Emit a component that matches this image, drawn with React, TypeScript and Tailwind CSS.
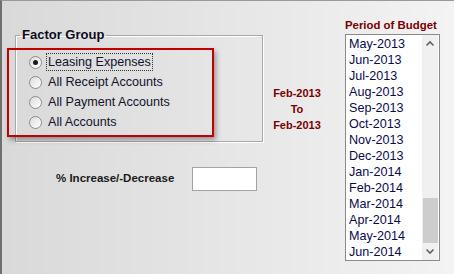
const groups = ["Leasing Expenses", "All Receipt Accounts", "All Payment Accounts", "All Accounts"];

const periods = [
  "May-2013", "Jun-2013", "Jul-2013", "Aug-2013", "Sep-2013", "Oct-2013", "Nov-2013",
  "Dec-2013", "Jan-2014", "Feb-2014", "Mar-2014", "Apr-2014", "May-2014", "Jun-2014",
];

function Radio({ checked }: { checked: boolean }) {
  return (
    <span className="w-[13px] h-[13px] rounded-full border border-[#8c8c8c] bg-gradient-to-br from-[#dcdcdc] to-white flex items-center justify-center shrink-0">
      {checked && <span className="w-[5px] h-[5px] rounded-full bg-[#1a1a1a]" />}
    </span>
  );
}

export default function App() {
  return (
    <div className="relative w-[454px] h-[274px] flex border-l-2 border-t border-l-[#6f6f6f] border-t-[#9a9a9a] bg-gradient-to-r from-[#d9d9d9] to-[#f3f3f3] font-['Liberation_Sans',Arial,sans-serif]">
      {/* left column */}
      <div className="pl-[13px] pt-[26px] w-[261px] shrink-0">
        <fieldset className="w-[248px] h-[115px] border border-[#a8a8a8] shadow-[1px_1px_0_#fff,inset_1px_1px_0_#fff]">
          <legend className="ml-[4px] px-[2px] text-[13px] leading-[16px] font-bold text-[#0c0c1c]">Factor Group</legend>
          <div className="pl-[13px] pt-[9px] flex flex-col">
            {groups.map((g, i) => (
              <div key={g} className="h-[20px] flex items-center gap-[5px]">
                <Radio checked={i === 0} />
                <span
                  className={
                    "text-[12.6px] leading-[16px] text-[#12122c] px-[1px] " +
                    (i === 0 ? "outline outline-1 outline-dotted outline-[#333]" : "")
                  }
                >
                  {g}
                </span>
              </div>
            ))}
          </div>
        </fieldset>
        <div className="mt-[25px] ml-[41px] flex items-center gap-[17px]">
          <span className="text-[11.5px] font-bold text-[#1a1a1a] w-[119px]">% Increase/-Decrease</span>
          <div className="w-[65px] h-[24px] bg-white border border-[#a3a3a3]" />
        </div>
      </div>

      {/* period range */}
      <div className="w-[68px] pt-[84px] flex flex-col items-center text-[11px] leading-[16px] font-bold text-[#7a0000]">
        <span>Feb-2013</span>
        <span>To</span>
        <span>Feb-2013</span>
      </div>

      {/* period list */}
      <div className="ml-[14px] pt-[17px] flex flex-col">
        <span className="text-[11.4px] leading-[14px] font-bold text-[#7a0000]">Period of Budget</span>
        <div className="mt-[2px] w-[95px] h-[227px] bg-white border border-[#8a8a8a] flex">
          <div className="flex-1 pt-[1px] pl-[3px] flex flex-col">
            {periods.map((p) => (
              <span key={p} className="text-[12.6px] leading-[16px] text-[#0a0a4a]">{p}</span>
            ))}
          </div>
          <div className="w-[16px] mr-[1px] bg-[#f0f0f0] flex flex-col items-center">
            <svg width="16" height="17" viewBox="0 0 16 17" className="shrink-0">
              <path d="M4.5 10.5 L8 7 L11.5 10.5" fill="none" stroke="#606060" strokeWidth="1.6" />
            </svg>
            <div className="h-[146px]" />
            <div className="w-[15px] h-[45px] bg-[#cdcdcd]" />
            <svg width="16" height="17" viewBox="0 0 16 17" className="shrink-0">
              <path d="M4.5 6.5 L8 10 L11.5 6.5" fill="none" stroke="#606060" strokeWidth="1.6" />
            </svg>
          </div>
        </div>
      </div>

      {/* red annotation */}
      <div className="absolute left-[5px] top-[47px] w-[207px] h-[89px] border-2 border-[#c00000] shadow-[2px_3px_5px_rgba(0,0,0,0.35)]" />
    </div>
  );
}
